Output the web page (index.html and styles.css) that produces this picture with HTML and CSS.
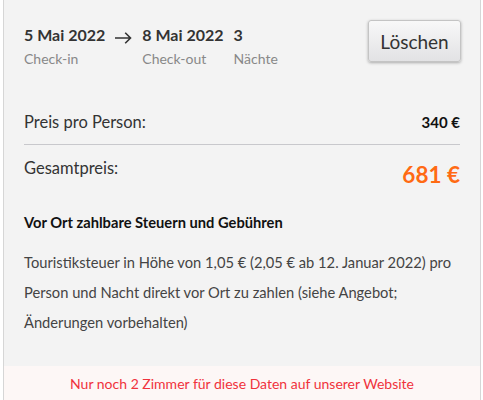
FILE: index.html
```html
<!DOCTYPE html>
<html lang="de">
<head>
<meta charset="utf-8">
<link rel="stylesheet" href="styles.css">
</head>
<body>
<div class="card">
  <div class="top">
    <div class="dates">
      <div class="col">
        <div class="val">5 Mai 2022</div>
        <div class="lbl">Check-in</div>
      </div>
      <div class="arrow">
        <svg width="17" height="14" viewBox="0 0 17 14"><path d="M0 7H15.5M10.2 1.8L15.5 7L10.2 12.2" fill="none" stroke="#333" stroke-width="1.6"/></svg>
      </div>
      <div class="col">
        <div class="val">8 Mai 2022</div>
        <div class="lbl">Check-out</div>
      </div>
      <div class="col">
        <div class="val">3</div>
        <div class="lbl">Nächte</div>
      </div>
    </div>
    <button class="btn">Löschen</button>
  </div>
  <div class="row per">
    <span class="name">Preis pro Person:</span>
    <span class="amt">340 €</span>
  </div>
  <div class="row total">
    <span class="name">Gesamtpreis:</span>
    <span class="big">681 €</span>
  </div>
  <div class="taxes">
    <h3>Vor Ort zahlbare Steuern und Gebühren</h3>
    <p>Touristiksteuer in Höhe von 1,05 € (2,05 € ab 12. Januar 2022) pro Person und Nacht direkt vor Ort zu zahlen (siehe Angebot; Änderungen vorbehalten)</p>
  </div>
  <div class="notice">Nur noch 2 Zimmer für diese Daten auf unserer Website</div>
</div>
</body>
</html>
```
FILE: styles.css
```css
html, body { margin: 0; padding: 0; background: #fff; }
body { font-family: Lato, "Open Sans", sans-serif; color: #333; }
.card {
  margin-left: 3px;
  width: 476px;
  height: 400px;
  border-left: 1px solid #d6d6d6;
  border-right: 1px solid #d6d6d6;
  background: #f3f3f3;
}
.top {
  display: flex;
  justify-content: space-between;
  align-items: flex-start;
  padding: 20px 20px 0 20px;
}
.dates { display: flex; padding-top: 5px; }
.col { display: flex; flex-direction: column; margin-right: 10px; }
.val { font-size: 16px; font-weight: 700; line-height: 20px; color: #333; }
.lbl { font-size: 14px; line-height: 20px; color: #888; margin-top: 4px; }
.arrow { padding: 4px 10px 0 0; }
.btn {
  font-family: inherit;
  font-size: 19px;
  color: #333;
  width: 93px;
  height: 42px;
  margin-right: -1px;
  border: 1px solid #c4c4c4;
  border-radius: 3px;
  background: linear-gradient(#f8f8f8, #e2e2e4);
  box-shadow: 0 1px 3px rgba(0,0,0,0.3);
}
.row {
  display: flex;
  justify-content: space-between;
  margin: 0 20px;
}
.per {
  padding-top: 41px;
  padding-bottom: 10px;
  border-bottom: 1px solid #c8c8cc;
  align-items: center;
}
.name { font-size: 16.5px; line-height: 24px; }
.amt { font-size: 15px; font-weight: 700; color: #111; }
.total { padding-top: 11px; align-items: flex-start; }
.big { font-size: 22.5px; font-weight: 700; color: #ff6a13; line-height: 26px; margin-top: 6px; }
.taxes { padding: 24px 20px 29px; }
.taxes h3 { font-size: 14.7px; font-weight: 700; color: #111; margin: 0 0 15px; line-height: 20px; }
.taxes p { font-size: 14.7px; line-height: 30px; margin: 0; color: #444; }
.notice {
  background: #fdf7f6;
  color: #f0323c;
  text-align: center;
  font-size: 14px;
  line-height: 20px;
  padding: 8px 0;
}
```
